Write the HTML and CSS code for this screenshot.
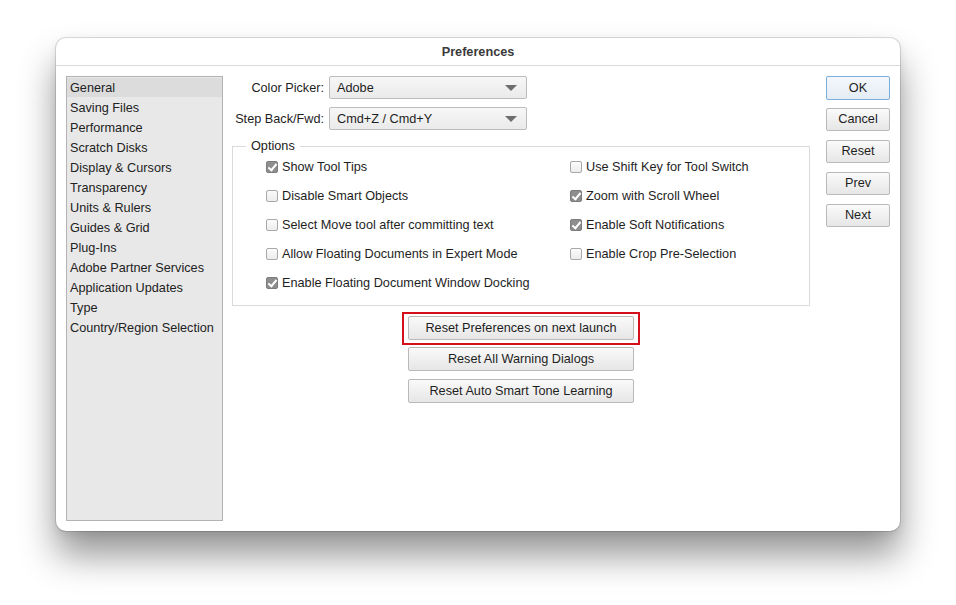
FILE: index.html
```html
<!DOCTYPE html>
<html>
<head>
<meta charset="utf-8">
<link rel="stylesheet" href="styles.css">
</head>
<body>
<div class="window">
  <div class="titlebar">Preferences</div>
  <div class="content">
    <ul class="sidebar">
      <li class="selected">General</li>
      <li>Saving Files</li>
      <li>Performance</li>
      <li>Scratch Disks</li>
      <li>Display &amp; Cursors</li>
      <li>Transparency</li>
      <li>Units &amp; Rulers</li>
      <li>Guides &amp; Grid</li>
      <li>Plug-Ins</li>
      <li>Adobe Partner Services</li>
      <li>Application Updates</li>
      <li>Type</li>
      <li>Country/Region Selection</li>
    </ul>
    <div class="main">
      <div class="field">
        <span class="label">Color Picker:</span>
        <div class="select"><span>Adobe</span><span class="arrow"></span></div>
      </div>
      <div class="field">
        <span class="label">Step Back/Fwd:</span>
        <div class="select"><span>Cmd+Z / Cmd+Y</span><span class="arrow"></span></div>
      </div>
      <fieldset class="options">
        <legend>Options</legend>
        <div class="opt-grid">
          <div class="col">
            <label class="check"><span class="box on"></span>Show Tool Tips</label>
            <label class="check"><span class="box"></span>Disable Smart Objects</label>
            <label class="check"><span class="box"></span>Select Move tool after committing text</label>
            <label class="check"><span class="box"></span>Allow Floating Documents in Expert Mode</label>
            <label class="check"><span class="box on"></span>Enable Floating Document Window Docking</label>
          </div>
          <div class="col">
            <label class="check"><span class="box"></span>Use Shift Key for Tool Switch</label>
            <label class="check"><span class="box on"></span>Zoom with Scroll Wheel</label>
            <label class="check"><span class="box on"></span>Enable Soft Notifications</label>
            <label class="check"><span class="box"></span>Enable Crop Pre-Selection</label>
          </div>
        </div>
      </fieldset>
      <div class="resets">
        <div class="highlight"><button class="btn wide">Reset Preferences on next launch</button></div>
        <button class="btn wide">Reset All Warning Dialogs</button>
        <button class="btn wide">Reset Auto Smart Tone Learning</button>
      </div>
    </div>
    <div class="buttons">
      <button class="btn side default">OK</button>
      <button class="btn side">Cancel</button>
      <button class="btn side">Reset</button>
      <button class="btn side">Prev</button>
      <button class="btn side">Next</button>
    </div>
  </div>
</div>
</body>
</html>
```

FILE: styles.css
```css
html, body {
  margin: 0;
  padding: 0;
  background: #ffffff;
}
html {
  height: 605px;
  overflow: hidden;
}
body {
  height: 605px;
  box-sizing: border-box;
  font-family: "Liberation Sans", Arial, sans-serif;
  font-size: 12.7px;
  color: #1e1e1e;
  padding: 38px 0 0 56px;
}
.window {
  width: 844px;
  height: 493px;
  box-sizing: border-box;
  background: #ffffff;
  border-radius: 10px;
  box-shadow: 0 0 0 1px rgba(0,0,0,0.12), 0 24px 36px rgba(0,0,0,0.42), 0 3px 8px rgba(0,0,0,0.08);
  display: flex;
  flex-direction: column;
  overflow: hidden;
}
.titlebar {
  height: 28px;
  box-sizing: border-box;
  border-bottom: 1px solid #d9d9d9;
  text-align: center;
  font-weight: bold;
  font-size: 12.7px;
  line-height: 29px;
  color: #3a3a3a;
}
.content {
  flex: 1;
  display: flex;
  padding: 10px 10px 10px 10px;
}
.sidebar {
  list-style: none;
  margin: 0;
  padding: 1px 0 0 0;
  width: 157px;
  box-sizing: border-box;
  background: #e8e8e8;
  border: 1px solid #b3b3b3;
  height: 445px;
}
.sidebar li {
  height: 20px;
  line-height: 20px;
  padding-left: 3px;
  white-space: nowrap;
  color: #222;
}
.sidebar li.selected {
  background: #dcdcdc;
  height: 19px;
  line-height: 20px;
  margin-bottom: 1px;
}
.main {
  width: 578px;
  margin-left: 9px;
  display: flex;
  flex-direction: column;
}
.field {
  display: flex;
  align-items: center;
  height: 23px;
  margin-bottom: 8px;
}
.label {
  width: 93px;
  margin-left: -1px;
  text-align: right;
  padding-right: 5px;
  white-space: nowrap;
}
.select {
  width: 198px;
  height: 23px;
  box-sizing: border-box;
  border: 1px solid #bcbcbc;
  border-radius: 2px;
  background: linear-gradient(#f7f7f7, #eaeaea);
  display: flex;
  align-items: center;
  justify-content: space-between;
  padding: 0 9px 0 7px;
}
.arrow {
  width: 0;
  height: 0;
  border-left: 6px solid transparent;
  border-right: 6px solid transparent;
  border-top: 6px solid #6e6e6e;
}
.options {
  margin: 1px 0 0 0;
  padding: 0;
  border: 1px solid #dadada;
  border-radius: 0;
  height: 167px;
  box-sizing: border-box;
}
.options legend {
  margin-left: 13px;
  padding: 0 5px;
  line-height: 14px;
  color: #222;
}
.opt-grid {
  display: flex;
  padding: 0 0 0 33px;
  margin-top: -1px;
}
.col {
  display: flex;
  flex-direction: column;
}
.col:first-child {
  width: 304px;
}
.check {
  display: flex;
  align-items: center;
  height: 29px;
  white-space: nowrap;
}
.box {
  width: 12px;
  height: 12px;
  box-sizing: border-box;
  border: 1px solid #a9a9a9;
  border-radius: 2px;
  background: linear-gradient(#fbfbfb, #ececec);
  margin-right: 4px;
  position: relative;
}
.box.on {
  background: #8e8e8e;
  border-color: #7c7c7c;
}
.box.on::after {
  content: "";
  position: absolute;
  left: 3px;
  top: 0px;
  width: 3px;
  height: 7px;
  border-right: 2px solid #fff;
  border-bottom: 2px solid #fff;
  transform: rotate(40deg);
}
.resets {
  display: flex;
  flex-direction: column;
  align-items: center;
  margin-top: 6px;
}
.highlight {
  border: 2px solid #d3101c;
  padding: 2px 4px 3px 4px;
  margin-bottom: 2px;
}
.btn {
  font-family: "Liberation Sans", Arial, sans-serif;
  font-size: 12.7px;
  color: #1e1e1e;
  border: 1px solid #b9b9b9;
  border-radius: 2px;
  background: linear-gradient(#fafafa, #e6e6e6);
  padding: 0;
  margin: 0;
}
.btn.wide {
  width: 226px;
  height: 24px;
  margin-bottom: 8px;
}
.highlight .btn.wide {
  margin-bottom: 0;
}
.buttons {
  width: 64px;
  margin-left: 16px;
  display: flex;
  flex-direction: column;
}
.btn.side {
  width: 64px;
  height: 23px;
  padding-bottom: 2px;
  margin-bottom: 9px;
}
.btn.default {
  height: 24px;
  padding-bottom: 0;
  margin-bottom: 8px;
  border-color: #7aaede;
  background: linear-gradient(#f4f8fc, #e4ecf4);
}
```
